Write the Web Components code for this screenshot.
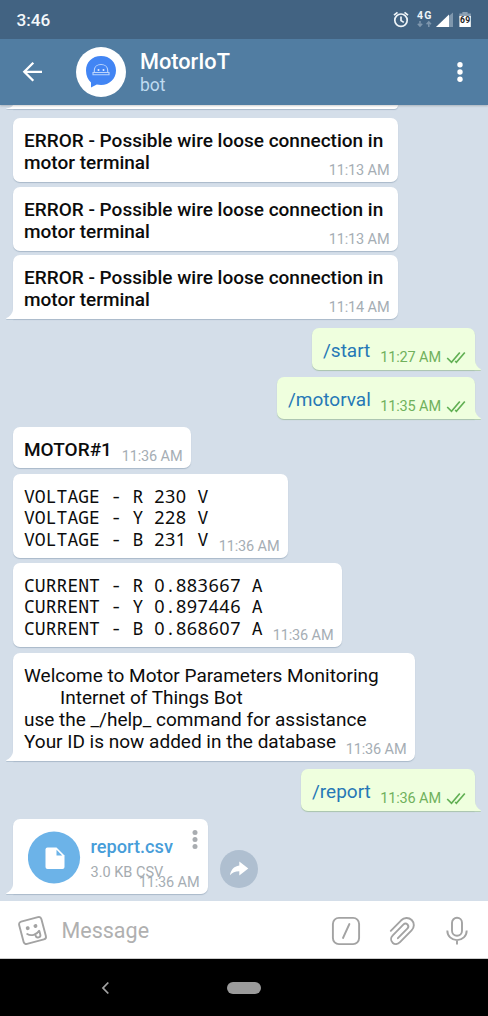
<!DOCTYPE html>
<html lang="en">
<head>
<meta charset="utf-8">
<title>MotorIoT</title>
<style>
  body { margin: 0; background: #d4dee9; font-family: Roboto, "Noto Sans", sans-serif; }
</style>
</head>
<body>
<phone-screen>
  <status-bar slot="top"></status-bar>
  <chat-header slot="top"><span slot="title">MotorIoT</span><span slot="subtitle">bot</span></chat-header>

  <chat-message cut style="--w:385px;--h:4px;--gap:0px" tail></chat-message>
  <chat-message style="--w:385px;--h:64px;--gap:9px" time="11:13 AM"><b>ERROR - Possible wire loose connection in
motor terminal</b></chat-message>
  <chat-message style="--w:385px;--h:64px;--gap:5px" time="11:13 AM"><b>ERROR - Possible wire loose connection in
motor terminal</b></chat-message>
  <chat-message style="--w:385px;--h:64px;--gap:4px" time="11:14 AM" tail><b>ERROR - Possible wire loose connection in
motor terminal</b></chat-message>
  <chat-message out style="--w:163px;--h:42px;--gap:9px" time="11:27 AM" tail>/start</chat-message>
  <chat-message out style="--w:198px;--h:42px;--gap:7px" time="11:35 AM" tail>/motorval</chat-message>
  <chat-message style="--w:178px;--h:41px;--gap:8px" time="11:36 AM"><b>MOTOR#1</b></chat-message>
  <chat-message style="--w:275px;--h:84px;--gap:6px" time="11:36 AM"><mono-text>VOLTAGE - R 230 V
VOLTAGE - Y 228 V
VOLTAGE - B 231 V</mono-text></chat-message>
  <chat-message style="--w:329px;--h:84px;--gap:5px" time="11:36 AM"><mono-text>CURRENT - R 0.883667 A
CURRENT - Y 0.897446 A
CURRENT - B 0.868607 A</mono-text></chat-message>
  <chat-message style="--w:402px;--h:108px;--gap:6px" time="11:36 AM" tail>Welcome to Motor Parameters Monitoring
<span style="padding-left:36px"></span>Internet of Things Bot
use the _/help_ command for assistance
Your ID is now added in the database</chat-message>
  <chat-message out style="--w:174px;--h:42px;--gap:8px" time="11:36 AM" tail>/report</chat-message>
  <chat-message file style="--w:195px;--h:75px;--gap:8px" time="11:36 AM" tail>
    <file-attachment name="report.csv" size="3.0 KB CSV"></file-attachment>
    <share-button slot="side"></share-button>
  </chat-message>

  <message-composer slot="bottom"></message-composer>
  <nav-bar slot="bottom"></nav-bar>
</phone-screen>

<script>
const define = (name, html, setup) => {
  const template = document.createElement('template');
  template.innerHTML = html;
  customElements.define(name, class extends HTMLElement {
    connectedCallback() {
      if (this.shadowRoot) return;
      const root = this.attachShadow({ mode: 'open' });
      root.append(template.content.cloneNode(true));
      if (setup) setup(this, root);
    }
  });
};

define('phone-screen', `
<style>
  :host { display: flex; flex-direction: column; width: 488px; height: 1016px; overflow: hidden; background: #d4dee9; }
  main { flex: 1; min-height: 0; display: flex; flex-direction: column; overflow: hidden; }
  header { display: flex; flex-direction: column; box-shadow: 0 1px 2px #0003; z-index: 1; }
</style>
<header><slot name="top"></slot></header>
<main><slot></slot></main>
<footer><slot name="bottom"></slot></footer>`);

define('status-bar', `
<style>
  :host { display: flex; align-items: center; justify-content: space-between; height: 39px; padding: 0 16px 0 16.5px; background: #426382; color: #f4f8fb; box-sizing: border-box; }
  time { font: 500 17.2px/20px Roboto, sans-serif; padding-top: 1px; }
  svg { display: block; }
</style>
<time>3:46</time>
<svg width="80" height="20" viewBox="392 10 80 20">
  <g fill="none" stroke="#eef4f8" stroke-width="1.7">
    <circle cx="401" cy="20.2" r="6.200"/><path d="M401 16.600v4l2.800 1.800M394 15.200l3.500-2.900M408 15.200l-3.500-2.900"/>
  </g>
  <text x="417" y="19.300" font-family="Roboto, sans-serif" font-weight="700" font-size="10.500" textLength="14.400" fill="#eef4f8">4G</text>
  <path d="M420 21v5M417.800 23.800l2.200 2.400 2.200-2.400M428.800 27v-5M426.600 24.200l2.200-2.400 2.200 2.400" fill="none" stroke="#7f97ad" stroke-width="1.5"/>
  <path d="M436 27l17-14.600V27z" fill="#7f97ad"/>
  <path d="M436 27l13-12.600V27z" fill="#fff"/>
  <path d="M459.400 13.600h3v-1.600h5.200v1.600h3.200V18h-11.400z" fill="#8ba0b4"/>
  <path d="M459.400 16h11.400v11h-11.400z" fill="#fff"/>
  <text x="459.900" y="23.300" font-family="Roboto, sans-serif" font-weight="700" font-size="8.600" textLength="10.400" fill="#222">69</text>
</svg>`);

define('chat-header', `
<style>
  :host { display: flex; height: 66px; align-items: center; background: #517da2; color: #fff; padding: 0 24px 0 22px; box-sizing: border-box; }
  svg { display: block; flex: none; }
  .avatar { margin-left: 33px; }
  .names { flex: 1; margin-left: 14px; display: flex; flex-direction: column; padding-top: 1px; }
  .title { font: 500 21.7px/25px Roboto, sans-serif; }
  .sub { font: 17.5px/21px Roboto, sans-serif; color: #bfdaf0; padding-top: 1px; }
</style>
<svg width="21" height="22" viewBox="22 61 21 22"><path d="M42 71.8H24.5M33.3 62.8l-9 9 9 9" fill="none" stroke="#fff" stroke-width="2.3"/></svg>
<svg class="avatar" width="50" height="50" viewBox="76 47 50 50">
  <circle cx="101" cy="72" r="25" fill="#fff"/>
  <path d="M101 56c9 0 15 6.200 15 14.500S109.500 85 101 85c-1.500 0-3-.2-4.200-.500L91 87.600v-5.200c-3-2.600-5-6.500-5-11.900C86 62.200 92 56 101 56z" fill="#4285f4"/>
  <g fill="none" stroke="#bcd5fc" stroke-width="1.1"><path d="M94.300 72.300v-1.800c0-3.700 3-6 6.700-6s6.700 2.300 6.700 6v1.800"/><path d="M93 72.500h16v2.300H93z"/></g>
  <circle cx="98.500" cy="70" r="1" fill="#e4eefe"/><circle cx="103.500" cy="70" r="1" fill="#e4eefe"/>
</svg>
<div class="names"><div class="title"><slot name="title"></slot></div><div class="sub"><slot name="subtitle"></slot></div></div>
<svg width="8" height="22" viewBox="456 61 8 22" fill="#fff"><circle cx="460" cy="64.800" r="2.700"/><circle cx="460" cy="72" r="2.700"/><circle cx="460" cy="79.200" r="2.700"/></svg>`);

define('chat-message', `
<style>
  :host { display: flex; align-items: flex-end; flex: none; margin-top: var(--gap); padding: 0 6px; color: #0c0c0c; font: 19px/22.1px Roboto, "Noto Sans", sans-serif; }
  :host([out]) { flex-direction: row-reverse; color: #2678b6; padding-right: 7px; }
  .tail { width: 7px; height: 10px; flex: none; display: block; fill: #fff; visibility: hidden; filter: drop-shadow(0 1px 0 #b4c3d2); }
  :host([tail]) .tail { visibility: visible; }
  :host([cut]) .tail { height: 4px; }
  :host([out]) .tail { transform: scaleX(-1); fill: #efffde; width: 6px; filter: drop-shadow(0 1px 0 #b5cfb4); }
  .bubble { display: grid; width: var(--w); height: var(--h); border-radius: 7px; background: #fff; box-sizing: border-box; box-shadow: 0 1px 1px #a9b9c9; }
  :host([tail]) .bubble { border-bottom-left-radius: 0; }
  :host([out]) .bubble { background: #efffde; box-shadow: 0 1px 1px #a9c4ac; border-radius: 7px; }
  :host([out][tail]) .bubble { border-bottom-right-radius: 0; }
  :host([cut]) .bubble { border-top-left-radius: 0; border-top-right-radius: 0; }
  .text { grid-area: 1/1; padding: 11.700px 0 0 11px; white-space: pre; }
  :host([out]) .text { padding-top: 12px; }
  :host([file]) .text { padding: 0; white-space: normal; }
  ::slotted(b) { font-weight: 500; }
  .meta { grid-area: 1/1; place-self: end; display: flex; align-items: center; gap: 5px; padding: 0 8.500px 2px 0; font-size: 14.500px; letter-spacing: -.12px; line-height: 18px; color: #a5adb4; }
  :host([out]) .meta { color: #70b15c; padding: 0 9px 3px 0; }
  .check { display: none; margin-top: -2px; }
  :host([out]) .check { display: block; }
</style>
<svg class="tail" viewBox="0 0 7 10" preserveAspectRatio="none"><path d="M7 0v10H.3V9C4 7.800 6.500 4.500 7 0z"/></svg>
<div class="bubble">
  <div class="text"><slot></slot></div>
  <div class="meta"><span></span><svg class="check" width="20" height="13" viewBox="0 0 20 13"><path d="M1.200 7l4.300 4.300L13.800 1.500M9.200 10l1.200 1.300 8.400-9.800" fill="none" stroke="#62b054" stroke-width="1.700"/></svg></div>
</div>
<slot name="side"></slot>`, (host, root) => {
  root.querySelector('.meta span').textContent = host.getAttribute('time') || '';
  if (host.hasAttribute('cut')) {
    root.querySelector('.meta').remove();
    root.querySelector('.text').remove();
  }
});

define('mono-text', `
<style>
  :host { display: block; white-space: normal; }
  div { white-space: pre; font: 18.080px/21.700px "Noto Sans Mono", "DejaVu Sans Mono", monospace; }
  .digits { font-family: "Noto Sans", sans-serif; letter-spacing: .510px; }
</style><div></div>`, (host, root) => {
  const box = root.querySelector('div');
  for (const part of host.textContent.split(/(\d+)/)) {
    const span = document.createElement('span');
    if (/^\d/.test(part)) span.className = 'digits';
    span.textContent = part;
    box.append(span);
  }
  host.textContent = '';
});

define('file-attachment', `
<style>
  :host { display: flex; padding: 11.500px 10px 0 14.500px; }
  svg { display: block; flex: none; }
  .info { flex: 1; margin-left: 10px; padding-top: 5px; white-space: nowrap; }
  .name { font: 500 18.200px/22px Roboto, sans-serif; color: #479dd9; }
  .size { font: 14.500px/18px Roboto, sans-serif; color: #a5abb0; margin-top: 6px; }
  .dots { margin-top: -2px; }
</style>
<svg width="53" height="53" viewBox="27.500 830 53 53">
  <circle cx="53.500" cy="856.500" r="26.100" fill="#6cb3e8"/>
  <path d="M47 846.500h9l8 8V866a2 2 0 0 1-2 2H47a2 2 0 0 1-2-2v-17.500a2 2 0 0 1 2-2z" fill="#fff"/><path d="M56 848.800v5.600h5.700z" fill="#6cb3e8"/>
</svg>
<div class="info"><div class="name"></div><div class="size"></div></div>
<svg class="dots" width="6" height="22" viewBox="0 0 6 22" fill="#a9adb1"><circle cx="3" cy="3.500" r="2.500"/><circle cx="3" cy="10.500" r="2.500"/><circle cx="3" cy="17.500" r="2.500"/></svg>`, (host, root) => {
  root.querySelector('.name').textContent = host.getAttribute('name');
  root.querySelector('.size').textContent = host.getAttribute('size');
});

define('share-button', `
<style>:host { display: block; margin: 0 0 6px 12px; } svg { display: block; }</style>
<svg width="38" height="38" viewBox="0 0 38 38"><circle cx="19" cy="19" r="19" fill="#afbfd0"/><path d="M19.300 11.500l9 7-9 7v-4.300c-4.300 0-7 1.200-9.300 4 .8-4.800 3.600-8.800 9.300-9.600z" fill="#fff"/></svg>`);

define('message-composer', `
<style>
  :host { display: flex; align-items: center; height: 58px; box-sizing: border-box; padding: 2px 20px 0 17px; background: #fff; border-bottom: 1px solid #ccc; }
  svg { display: block; flex: none; fill: none; stroke: #a3a3a3; stroke-width: 1.900; stroke-linecap: round; stroke-linejoin: round; }
  .hint { flex: 1; margin-left: 13.500px; padding-top: 1px; font: 21.500px/26px Roboto, sans-serif; color: #b0b0b0; }
  .clip { margin-left: 28px; } .mic { margin-left: 30px; }
</style>
<svg width="31" height="31" viewBox="0 0 31 31"><g transform="rotate(-15 15.500 15.500)">
  <rect x="4" y="4" width="23" height="23" rx="2.800"/>
  <circle cx="11.500" cy="12" r="1" fill="#a3a3a3"/><circle cx="19.500" cy="12" r="1" fill="#a3a3a3"/>
  <path d="M9.500 17.500c3 3.300 9 3.300 12.300 0M17.200 19.800v1.500a2.400 2.400 0 0 0 4.800 0v-3.600"/>
</g></svg>
<div class="hint">Message</div>
<svg width="30" height="30" viewBox="0 0 30 30"><rect x="1.900" y="1.900" width="26.200" height="26.200" rx="6"/><path d="M18.400 8l-6.400 14"/></svg>
<svg class="clip" width="27" height="30" viewBox="0 0 27 30"><path d="M1.800 14.800L12.200 4.300C15 1.600 19.500 1 22.700 4c3 3 2.700 7.600-.1 10.400L11 26.200c-2.200 2.200-5.300 2.500-7.400.5-2.100-2.100-1.900-5.300.2-7.400L14.300 8.700c1.200-1.200 3-1.300 4.200-.2 1.100 1.200 1 3-.2 4.200l-9.400 9.500"/></svg>
<svg class="mic" width="22" height="30" viewBox="0 0 22 30"><rect x="6" y="1.800" width="10" height="18" rx="5"/><path d="M1.300 14.500c0 5.600 4.300 9.600 9.700 9.600s9.700-4 9.700-9.600M11 24.300v4.200" stroke-linecap="butt"/></svg>`);

define('nav-bar', `
<style>
  :host { display: flex; align-items: center; height: 57px; box-sizing: border-box; padding-left: 101px; background: #000; }
  .pill { width: 34px; height: 12px; border-radius: 6px; background: #9b9b9b; margin-left: 117px; }
  svg { display: block; }
</style>
<svg width="9" height="14" viewBox="0 0 9 14"><path d="M7.300 1.500L2 7l5.300 5.500" fill="none" stroke="#a2a2a2" stroke-width="1.800"/></svg>
<div class="pill"></div>`);
</script>
</body>
</html>
